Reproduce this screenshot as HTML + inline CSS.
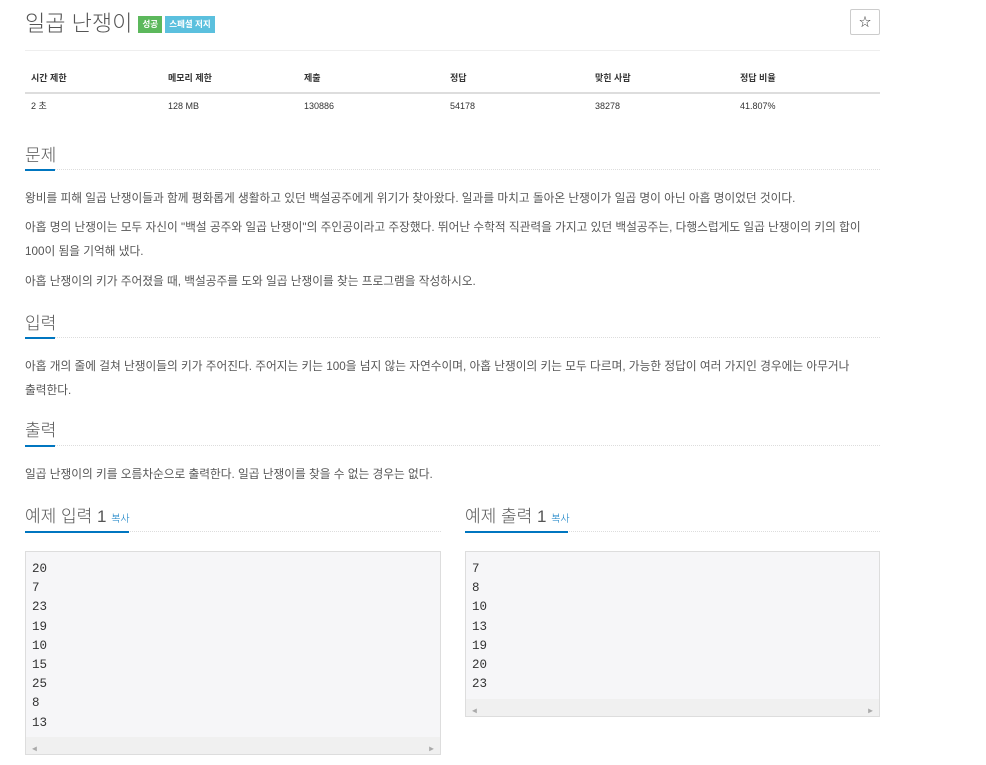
<!DOCTYPE html><html><head><meta charset="utf-8"><style>
body{margin:0;background:#fff;font-family:"Liberation Sans","Noto Sans CJK KR",sans-serif;color:#555;}
h1{position:absolute;left:25px;top:9px;margin:0;font-size:22px;font-weight:300;color:#555;line-height:30px}
.lb{display:inline-block;font-size:8.5px;color:#fff;padding:2px 4px;vertical-align:4px;font-weight:bold;line-height:13px}
.star{position:absolute;left:850px;top:9px;width:28px;height:24px;border:1px solid #ccc;border-radius:2px;font-size:12px;text-align:center;line-height:24px;color:#333}
.hr{position:absolute;left:25px;width:855px;border-top:1px solid #eee;}
.t{position:absolute;font-size:9px;line-height:14px;color:#333}
.h2{position:absolute;font-size:17px;color:#555;font-weight:300;line-height:22px}
.ul{position:absolute;height:1px;border-top:1px dotted #ddd;}
.ul b{position:absolute;left:0;top:-1px;height:2px;background:#0076c0;}
p{position:absolute;left:25px;margin:0;font-size:11.7px;line-height:24px;white-space:nowrap;color:#555}
pre{position:absolute;margin:0;background:#f6f6f8;border:1px solid #ddd;font-family:"Liberation Mono",monospace;font-size:12.5px;line-height:19.2px;padding:8px 6px 0;box-sizing:border-box;color:#333}
.sb{position:absolute;left:0;right:0;bottom:0;height:17px;background:#f0f0f0;font-size:8px;color:#aaa;}
</style></head><body>
<h1>일곱 난쟁이 <span class="lb" style="background:#5cb85c">성공</span> <span class="lb" style="background:#5bc0de;margin-left:-3px">스페셜 저지</span></h1>
<div class="star">☆</div>
<div class="hr" style="top:50px"></div>
<div class="t" style="left:31px;top:71px;font-weight:bold">시간 제한</div>
<div class="t" style="left:168px;top:71px;font-weight:bold">메모리 제한</div>
<div class="t" style="left:304px;top:71px;font-weight:bold">제출</div>
<div class="t" style="left:450px;top:71px;font-weight:bold">정답</div>
<div class="t" style="left:595px;top:71px;font-weight:bold">맞힌 사람</div>
<div class="t" style="left:740px;top:71px;font-weight:bold">정답 비율</div>
<div class="hr" style="top:92px;border-color:#ddd;border-width:2px 0 0"></div>
<div class="t" style="left:31px;top:99px">2 초</div>
<div class="t" style="left:168px;top:99px">128 MB</div>
<div class="t" style="left:304px;top:99px">130886</div>
<div class="t" style="left:450px;top:99px">54178</div>
<div class="t" style="left:595px;top:99px">38278</div>
<div class="t" style="left:740px;top:99px">41.807%</div>

<div class="h2" style="left:25px;top:145px">문제</div>
<div class="ul" style="left:25px;width:855px;top:169px"><b style="width:30px"></b></div>
<p style="top:187px">왕비를 피해 일곱 난쟁이들과 함께 평화롭게 생활하고 있던 백설공주에게 위기가 찾아왔다. 일과를 마치고 돌아온 난쟁이가 일곱 명이 아닌 아홉 명이었던 것이다.</p>
<p style="top:216px">아홉 명의 난쟁이는 모두 자신이 "백설 공주와 일곱 난쟁이"의 주인공이라고 주장했다. 뛰어난 수학적 직관력을 가지고 있던 백설공주는, 다행스럽게도 일곱 난쟁이의 키의 합이<br>100이 됨을 기억해 냈다.</p>
<p style="top:270px">아홉 난쟁이의 키가 주어졌을 때, 백설공주를 도와 일곱 난쟁이를 찾는 프로그램을 작성하시오.</p>

<div class="h2" style="left:25px;top:313px">입력</div>
<div class="ul" style="left:25px;width:855px;top:337px"><b style="width:30px"></b></div>
<p style="top:355px">아홉 개의 줄에 걸쳐 난쟁이들의 키가 주어진다. 주어지는 키는 100을 넘지 않는 자연수이며, 아홉 난쟁이의 키는 모두 다르며, 가능한 정답이 여러 가지인 경우에는 아무거나<br>출력한다.</p>

<div class="h2" style="left:25px;top:420px">출력</div>
<div class="ul" style="left:25px;width:855px;top:445px"><b style="width:30px"></b></div>
<p style="top:463px">일곱 난쟁이의 키를 오름차순으로 출력한다. 일곱 난쟁이를 찾을 수 없는 경우는 없다.</p>

<div class="h2" style="left:25px;top:506px">예제 입력 1 <span style="font-size:10px;color:#0076c0">복사</span></div>
<div class="ul" style="left:25px;width:416px;top:531px"><b style="width:104px"></b></div>
<div class="h2" style="left:465px;top:506px">예제 출력 1 <span style="font-size:10px;color:#0076c0">복사</span></div>
<div class="ul" style="left:465px;width:415px;top:531px"><b style="width:103px"></b></div>

<pre style="left:25px;top:551px;width:416px;height:204px">20
7
23
19
10
15
25
8
13<div class="sb"><span style="position:absolute;left:6px;top:3px">◀</span><span style="position:absolute;right:6px;top:3px">▶</span></div></pre>
<pre style="left:465px;top:551px;width:415px;height:166px">7
8
10
13
19
20
23<div class="sb"><span style="position:absolute;left:6px;top:3px">◀</span><span style="position:absolute;right:6px;top:3px">▶</span></div></pre>
</body></html>
